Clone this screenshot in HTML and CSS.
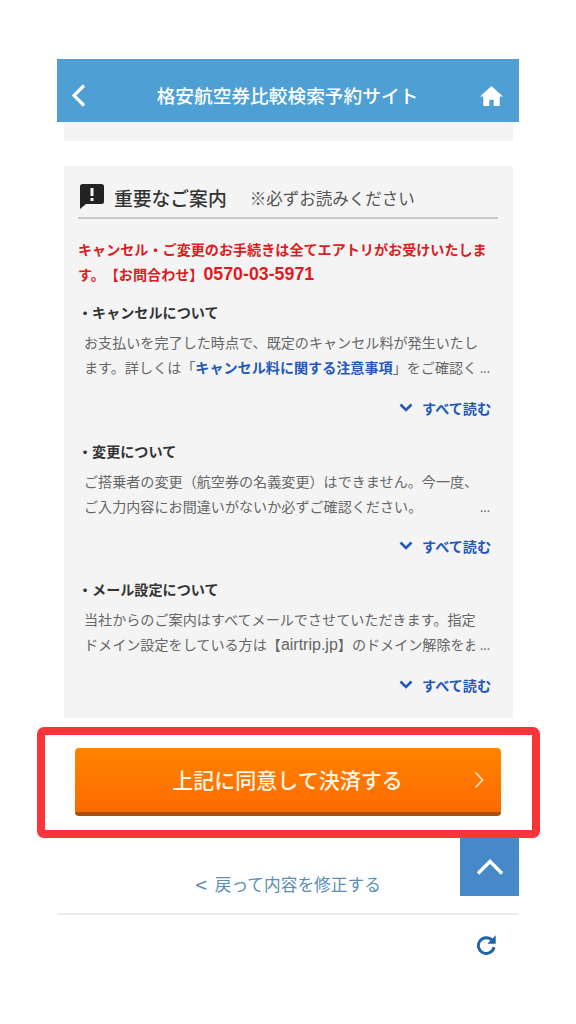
FILE: index.html
```html
<!DOCTYPE html>
<html lang="ja">
<head>
<meta charset="utf-8">
<title>格安航空券比較検索予約サイト</title>
<link rel="stylesheet" href="styles.css">
</head>
<body>
<div class="page">
  <header class="topbar">
    <svg class="back-icon" viewBox="0 0 15 23"><path d="M13 1.500 3 11.500l10 10" fill="none" stroke="#fff" stroke-width="3.200"/></svg>
    <h1 class="topbar-title">格安航空券比較検索予約サイト</h1>
    <svg class="home-icon" viewBox="0 0 24 21"><path d="M12 0 0 11h3.400v10h6.300v-6.500h4.600V21h6.300V11H24z" fill="#fff"/></svg>
  </header>
  <div class="strip"></div>
  <section class="card">
    <div class="card-head">
      <svg class="alert-icon" viewBox="0 0 24 25"><path d="M2.500 0h19A2.500 2.500 0 0 1 24 2.500v15a2.500 2.500 0 0 1-2.500 2.500H6l-6 5V2.500A2.500 2.500 0 0 1 2.500 0zM10.500 4v8h3V4zm0 10v3h3v-3z" fill="#222" fill-rule="evenodd"/></svg>
      <h2 class="card-title">重要なご案内</h2>
      <span class="card-note">※必ずお読みください</span>
    </div>
    <div class="alert-text">
      <div class="alert-line">キャンセル・ご変更のお手続きは全てエアトリがお受けいたしま</div>
      <div class="alert-line">す。【お問合わせ】<span class="phone">0570-03-5971</span></div>
    </div>

    <div class="item">
      <h3 class="item-title">・キャンセルについて</h3>
      <div class="item-body">
        <div class="line">お支払いを完了した時点で、既定のキャンセル料が発生いたし</div>
        <div class="line clip">ます。詳しくは「<b class="link">キャンセル料に関する注意事項</b>」をご確認く<span class="dots">...</span></div>
      </div>
      <div class="more"><svg class="more-icon" viewBox="0 0 14 10"><path d="M1.500 1.500 7 7l5.500-5.500" fill="none" stroke="#2358b8" stroke-width="2.600"/></svg><span>すべて読む</span></div>
    </div>

    <div class="item">
      <h3 class="item-title">・変更について</h3>
      <div class="item-body">
        <div class="line">ご搭乗者の変更（航空券の名義変更）はできません。今一度、</div>
        <div class="line clip">ご入力内容にお間違いがないか必ずご確認ください。<span class="dots">...</span></div>
      </div>
      <div class="more"><svg class="more-icon" viewBox="0 0 14 10"><path d="M1.500 1.500 7 7l5.500-5.500" fill="none" stroke="#2358b8" stroke-width="2.600"/></svg><span>すべて読む</span></div>
    </div>

    <div class="item">
      <h3 class="item-title">・メール設定について</h3>
      <div class="item-body">
        <div class="line">当社からのご案内はすべてメールでさせていただきます。指定</div>
        <div class="line clip">ドメイン設定をしている方は【<span class="latin">airtrip.jp</span>】のドメイン解除をお<span class="dots">...</span></div>
      </div>
      <div class="more"><svg class="more-icon" viewBox="0 0 14 10"><path d="M1.500 1.500 7 7l5.500-5.500" fill="none" stroke="#2358b8" stroke-width="2.600"/></svg><span>すべて読む</span></div>
    </div>
  </section>

  <div class="pay-btn">
    <span class="pay-label">上記に同意して決済する</span>
    <svg class="pay-arrow" viewBox="0 0 10 18"><path d="M1.500 1.500 8.500 9l-7 7.500" fill="none" stroke="#ffe3c4" stroke-width="1.800"/></svg>
  </div>

  <div class="back-link"><span class="back-mark">&lt;</span>戻って内容を修正する</div>

  <div class="foot">
    <svg class="reload-icon" viewBox="0 0 24 24"><path d="M18.600 7.400A9 9 0 1 0 20.600 15" fill="none" stroke="#1f64a8" stroke-width="3.200"/><path d="M22.500 1.500v9.500H13z" fill="#1f64a8"/></svg>
  </div>

  <div class="highlight"></div>
  <div class="to-top"><svg class="to-top-icon" viewBox="0 0 28 18"><path d="M2 15.500 14 3.500l12 12" fill="none" stroke="#fff" stroke-width="3.400"/></svg></div>
</div>
</body>
</html>
```
FILE: styles.css
```css
* { box-sizing: border-box; }
html, body { margin: 0; padding: 0; background: #fff; }
body {
  width: 576px;
  height: 1024px;
  overflow: hidden;
  font-family: "Noto Sans CJK JP", "Noto Sans", sans-serif;
  color: #666;
  text-spacing-trim: space-all;
}
h1, h2, h3, p { margin: 0; }
.page {
  position: relative;
  width: 462px;
  margin-left: 57px;
  padding-top: 59px;
}
.topbar {
  height: 63px;
  background: #4e9fd3;
  display: flex;
  align-items: center;
  padding: 9px 16px 0 14px;
}
.back-icon { width: 15px; height: 23px; flex: none; }
.topbar-title {
  flex: 1;
  text-align: center;
  color: #fff;
  font-size: 18.700px;
  font-weight: 500;
  line-height: 1;
  padding-left: 9px;
}
.home-icon { width: 23px; height: 20px; flex: none; margin-top: 2px; }
.strip { height: 19px; margin: 0 6px 0 7px; background: #f4f4f5; }
.card {
  margin: 25px 6px 0 7px;
  height: 552px;
  background: #f4f4f5;
  padding: 0 15px 0 14px;
}
.card-head {
  height: 53px;
  display: flex;
  align-items: center;
  border-bottom: 2px solid #c8c8c8;
  padding: 13px 0 0 2px;
}
.alert-icon { width: 24px; height: 25px; flex: none; margin: -4px 10px 0 0; }
.card-title { font-size: 18.800px; font-weight: 500; color: #333; line-height: 1; }
.card-note { font-size: 16.500px; color: #555; margin-left: 23px; line-height: 1; }
.alert-text {
  margin-top: 18px;
  font-size: 14.100px;
  font-weight: 700;
  color: #dd1c22;
}
.alert-line { height: 25px; line-height: 25px; white-space: nowrap; }
.phone { font-family: "Liberation Sans", sans-serif; font-size: 17.800px; line-height: 1; }
.latin { font-family: "Liberation Sans", sans-serif; font-size: 16px; line-height: 1; }
.item { margin-top: 13px; }
.item + .item { margin-top: 19px; }
.item-title {
  font-size: 14.100px;
  line-height: 25px;
  font-weight: 700;
  color: #333;
  height: 25px;
}
.item-body { margin-top: 5px; padding-left: 6px; width: 415px; }
.line {
  font-size: 14.100px;
  line-height: 25px;
  height: 25px;
  color: #666;
  white-space: nowrap;
  overflow: hidden;
}
.clip { position: relative; }
.dots {
  position: absolute;
  right: 3px;
  top: 0;
  width: 15px;
  background: #f4f4f5;
  font-size: 12px;
  text-align: right;
}
.link { color: #2358b8; font-weight: 700; }
.more {
  margin-top: 15.500px;
  height: 24px;
  display: flex;
  justify-content: flex-end;
  align-items: center;
  gap: 9px;
  padding-right: 7px;
  font-size: 14.100px;
  font-weight: 700;
  color: #2358b8;
}
.more-icon { width: 14px; height: 10px; flex: none; }
.pay-btn {
  position: relative;
  margin: 30px 18px 0;
  height: 68px;
  border-radius: 4px;
  background: linear-gradient(#ff8400, #fd6a00);
  border-bottom: 4px solid #a8500f;
  display: flex;
  align-items: center;
  justify-content: center;
}
.pay-label { color: #fff5e6; font-size: 21px; font-weight: 500; line-height: 1; margin-top: -2px; margin-right: 1px; }
.pay-arrow { position: absolute; right: 17px; top: 23px; width: 10px; height: 18px; }
.back-link {
  margin-top: 58px;
  height: 20px;
  display: flex;
  align-items: center;
  justify-content: center;
  font-size: 16.700px;
  line-height: 20px;
  color: #5b8fb5;
}
.back-mark { margin-right: 8px; font-size: 21px; line-height: 1; }
.foot {
  margin-top: 19px;
  border-top: 2px solid #ececec;
  display: flex;
  justify-content: flex-end;
  padding: 19px 22px 0 0;
}
.reload-icon { width: 21px; height: 21px; }
.highlight {
  position: absolute;
  left: -20px;
  top: 727px;
  width: 503px;
  height: 111px;
  border: 8px solid #fb333b;
  border-radius: 7px;
}
.to-top {
  position: absolute;
  left: 403px;
  top: 838px;
  width: 59px;
  height: 58px;
  background: #4688c8;
  display: flex;
  justify-content: center;
  padding-top: 20px;
}
.to-top-icon { width: 28px; height: 18px; }
```
